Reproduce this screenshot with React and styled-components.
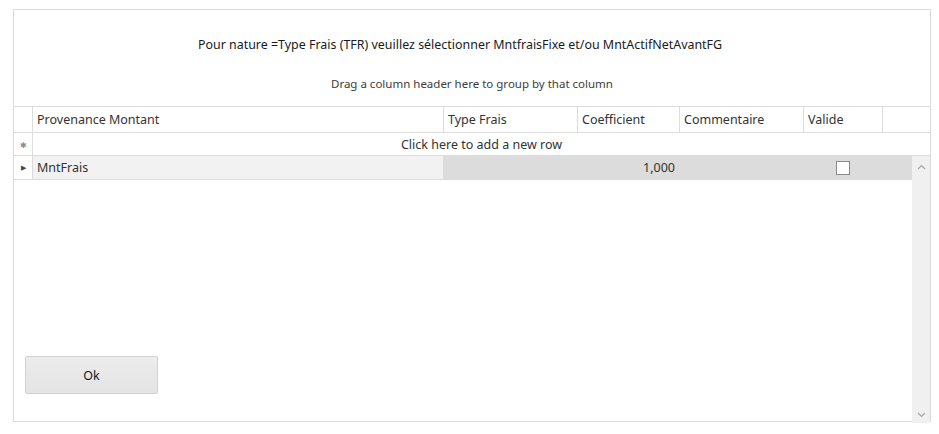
import React from 'react'
import styled, { createGlobalStyle } from 'styled-components'

const GlobalStyle = createGlobalStyle`
  body {
    margin: 0;
    background: #ffffff;
    font-family: "Noto Sans", "Open Sans", Arial, sans-serif;
    color: #222222;
  }
`

const COLUMNS = '19px 411px 134px 102px 124px 79px 1fr'

const Page = styled.div`
  width: 939px;
  height: 434px;
  padding: 9px 0 0 13px;
  box-sizing: border-box;
`
const Frame = styled.div`
  width: 918px;
  height: 413px;
  box-sizing: border-box;
  border: 1px solid #dadada;
  display: flex;
  flex-direction: column;
`
const GroupPanel = styled.div`
  height: 96px;
  display: flex;
  flex-direction: column;
  align-items: center;
  flex-shrink: 0;
`
const Title = styled.div`
  font-size: 12.45px;
  color: #1a1a1a;
  margin-top: 26px;
  padding-right: 24px;
  line-height: 18px;
`
const GroupHint = styled.div`
  font-size: 11.5px;
  color: #3c3c3c;
  margin-top: 22px;
  line-height: 16px;
`
const Row = styled.div`
  display: grid;
  grid-template-columns: ${COLUMNS};
  height: ${p => p.$height}px;
  border-top: ${p => (p.$top ? '1px solid #dcdcdc' : 'none')};
  border-bottom: 1px solid #dcdcdc;
  box-sizing: content-box;
  flex-shrink: 0;
`
const Cell = styled.div`
  border-right: ${p => (p.$last ? 'none' : '1px solid #dcdcdc')};
  background: ${p => p.$bg || 'transparent'};
  display: flex;
  align-items: center;
  justify-content: ${p => p.$align || 'flex-start'};
  padding: 0 4px;
  font-size: 12.5px;
  color: #333333;
  overflow: hidden;
  white-space: nowrap;
`
const RowHeader = styled.div`
  border-right: 1px solid #dcdcdc;
  display: flex;
  align-items: center;
  justify-content: center;
  color: ${p => p.$color};
  font-size: ${p => p.$size}px;
`
const NewRow = styled.div`
  display: grid;
  grid-template-columns: 19px 1fr;
  height: 22px;
  border-bottom: 1px solid #dcdcdc;
  flex-shrink: 0;
`
const NewRowText = styled.div`
  display: flex;
  align-items: center;
  justify-content: center;
  font-size: 12.5px;
  color: #333333;
`
const Body = styled.div`
  flex: 1;
  display: flex;
  min-height: 0;
`
const Rows = styled.div`
  flex: 1;
  display: flex;
  flex-direction: column;
`
const Footer = styled.div`
  margin-top: auto;
  padding: 0 0 27px 11px;
`
const Button = styled.button`
  width: 133px;
  height: 38px;
  border: 1px solid #d2d2d2;
  border-radius: 2px;
  background: linear-gradient(#ececec, #e4e4e4);
  font-family: inherit;
  font-size: 12.5px;
  color: #1a1a1a;
  cursor: pointer;
`
const Checkbox = styled.span`
  width: 12px;
  height: 12px;
  border: 1px solid #8a8a8a;
  background: #ffffff;
  display: block;
`
const Scrollbar = styled.div`
  width: 18px;
  margin-bottom: -2px;
  background: #f0f0f0;
  display: flex;
  flex-direction: column;
  justify-content: space-between;
  align-items: center;
  padding: 8px 0 5px;
  box-sizing: border-box;
`

const Chevron = ({ up }) => (
  <svg width="9" height="6" viewBox="0 0 9 6">
    <path
      d={up ? 'M1 5 L4.5 1.5 L8 5' : 'M1 1 L4.5 4.5 L8 1'}
      fill="none"
      stroke="#a6a6a6"
      strokeWidth="1.2"
    />
  </svg>
)

const headers = ['Provenance Montant', 'Type Frais', 'Coefficient', 'Commentaire', 'Valide']

export default function App() {
  return (
    <Page>
      <GlobalStyle />
      <Frame>
        <GroupPanel>
          <Title>Pour nature =Type Frais (TFR) veuillez sélectionner MntfraisFixe et/ou MntActifNetAvantFG</Title>
          <GroupHint>Drag a column header here to group by that column</GroupHint>
        </GroupPanel>
        <Row $height={25} $top>
          <RowHeader />
          {headers.map(h => (
            <Cell key={h}>{h}</Cell>
          ))}
          <Cell $last />
        </Row>
        <NewRow>
          <RowHeader $color="#8c8c8c" $size={8}>✱</RowHeader>
          <NewRowText>Click here to add a new row</NewRowText>
        </NewRow>
        <Body>
          <Rows>
            <Row $height={23}>
              <RowHeader $color="#444444" $size={7}>▶</RowHeader>
              <Cell $bg="#f2f2f2">MntFrais</Cell>
              <Cell $bg="#dcdcdc" />
              <Cell $bg="#dcdcdc" $align="flex-end">1,000</Cell>
              <Cell $bg="#dcdcdc" />
              <Cell $bg="#dcdcdc" $align="center">
                <Checkbox />
              </Cell>
              <Cell $bg="#dcdcdc" $last />
            </Row>
            <Footer>
              <Button>Ok</Button>
            </Footer>
          </Rows>
          <Scrollbar>
            <Chevron up />
            <Chevron />
          </Scrollbar>
        </Body>
      </Frame>
    </Page>
  )
}
